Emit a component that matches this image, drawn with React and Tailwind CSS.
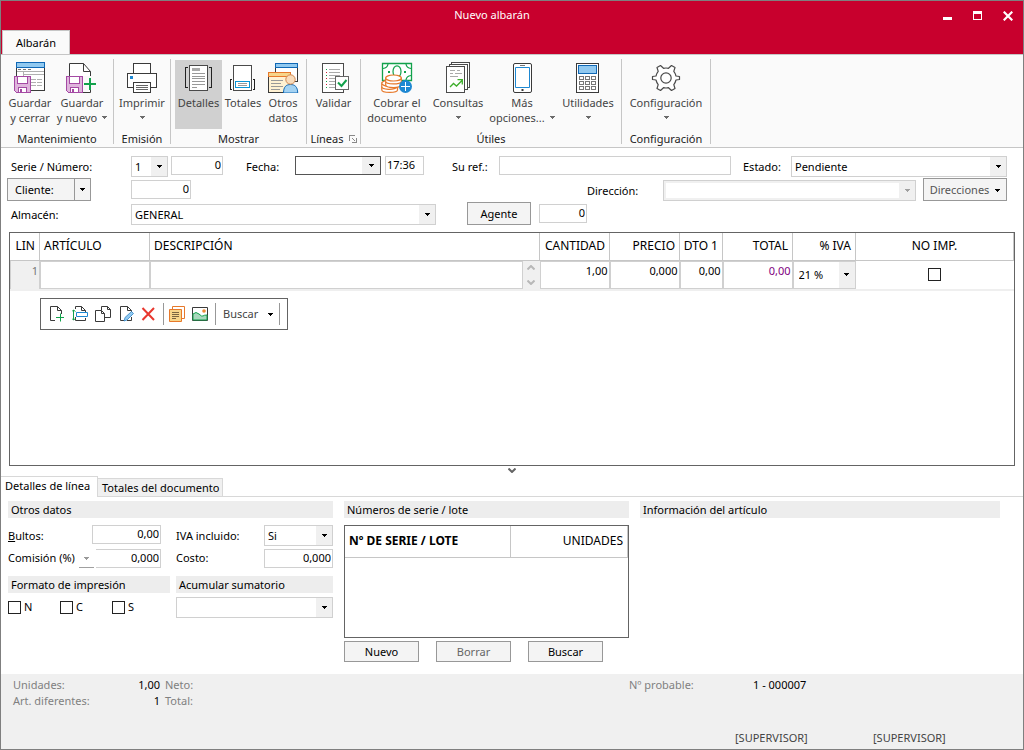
import { useState } from "react";

const Caret = ({ className = "text-black" }) => (
  <svg width="5" height="3" viewBox="0 0 5 3" fill="currentColor" shapeRendering="crispEdges" className={`shrink-0 ${className}`}>
    <path d="M0 0H5V1H4V2H3V3H2V2H1V1H0Z" />
  </svg>
);

const Floppy = () => (
  <g shapeRendering="crispEdges">
    <path d="M.5 15.5H16.5V31.5H2.5L.5 29.5Z" fill="#dfb5dc" stroke="#a54aa4" />
    <path d="M3.5 15.5H13.5V22.5H3.5Z" fill="#fff" stroke="#a54aa4" />
    <path d="M4.5 26.5H12.5V31.5H4.5Z" fill="#fff" stroke="#a54aa4" />
    <path d="M6 28H8V31H6Z" fill="#a54aa4" />
  </g>
);

const Icon = ({ children, size = 32 }) => (
  <svg width={size} height={size} viewBox={`0 0 ${size} ${size}`} fill="none" className="shrink-0">
    {children}
  </svg>
);

const SaveCloseIcon = () => (
  <Icon>
    <g shapeRendering="crispEdges">
      <path d="M2.5 6.5H30.5V29.5H2.5Z" fill="#fff" stroke="#3a3a3a" />
      <path d="M2.5 1.5H30.5V6.5H2.5Z" fill="#91c9f0" stroke="#1068b5" />
      <path d="M4 8.5H7M9 8.5H12M14 8.5H17" stroke="#777" />
      <path d="M3 10.5H30M9.5 11V15M10 13.5H30" stroke="#b0b0b0" />
      <path d="M17 18.5H28M17 21.5H28M17 24.5H28" stroke="#b0b0b0" strokeDasharray="5 1" />
    </g>
    <Floppy />
  </Icon>
);

const SaveNewIcon = () => (
  <Icon>
    <path d="M3.5 15V2.5H17.5L24.5 10.5V15M24.5 29V31.5H17" fill="#fff" stroke="#3a3a3a" />
    <path d="M17.5 2.5V10.5H24.5" stroke="#3a3a3a" />
    <Floppy />
    <path d="M18 23H30M24 17V29" stroke="#12a14b" strokeWidth="2" />
  </Icon>
);

const PrinterIcon = () => (
  <Icon>
    <g shapeRendering="crispEdges" stroke="#3a3a3a">
      <path d="M7.5 2.5H24.5V12.5H7.5Z" fill="#fff" />
      <path d="M1.5 12.5H30.5V26.5H1.5Z" fill="#fff" />
      <path d="M7.5 21.5H24.5V31.5H7.5Z" fill="#fff" />
      <path d="M10 24.5H22M10 26.5H22M10 28.5H22" stroke="#666" />
      <path d="M4 15H7V18H4Z" fill="#1e88d2" stroke="none" />
    </g>
  </Icon>
);

const DetailsIcon = () => (
  <Icon>
    <g shapeRendering="crispEdges">
      <path d="M6.5 4.5H24.5V29.5H6.5Z" fill="#fff" stroke="#4a4a4a" />
      <path d="M5 6.5H2.5V26.5H5M26 6.5H28.5V26.5H26" stroke="#222" />
      <path d="M9 7H17V10H9Z" fill="#aaa" />
      <path d="M9 12.5H22M9 15.5H22M9 17.5H22M9 20.5H22M9 23.5H22M9 26.5H14" stroke="#999" />
    </g>
  </Icon>
);

const TotalsIcon = () => (
  <Icon>
    <g shapeRendering="crispEdges">
      <path d="M6.5 4.5H24.5V29.5H6.5Z" fill="#fff" stroke="#4a4a4a" />
      <path d="M5 18.5H3.5V28.5H5M26 18.5H27.5V28.5H26" stroke="#222" />
      <path d="M8.5 20.5H22.5V26.5H8.5Z" fill="#fff" stroke="#0a94d6" />
      <path d="M11 22.5H20M11 24.5H20" stroke="#999" />
    </g>
  </Icon>
);

const OtherDataIcon = () => (
  <Icon>
    <g shapeRendering="crispEdges">
      <path d="M8.5 6.5H30.5V20.5H8.5Z" fill="#fff" stroke="#3a3a3a" />
      <path d="M8.5 2.5H30.5V6.5H8.5Z" fill="#91c9f0" stroke="#1068b5" />
      <path d="M1.5 15.5H23.5V31.5H1.5Z" fill="#fff1d2" stroke="#3a3a3a" />
      <path d="M1.5 11.5H23.5V15.5H1.5Z" fill="#f7d58a" stroke="#e7792b" />
      <path d="M4 19.5H16M4 22.5H14M4 25.5H16M4 28.5H13" stroke="#999" />
    </g>
    <path d="M16.5 32C16.5 26 19 23.5 23.5 23.5S30.7 26 30.7 32Z" fill="#a4d2f2" stroke="#1068b5" />
    <circle cx="23.5" cy="18.5" r="4.7" fill="#f9dcbc" stroke="#d08850" />
  </Icon>
);

const ValidateIcon = () => (
  <Icon>
    <g shapeRendering="crispEdges">
      <path d="M4.5 2.5H25.5V31.5H4.5Z" fill="#fff" stroke="#4a4a4a" />
      <path d="M11 8.5H22M11 11.5H22M11 14.5H22M11 17.5H18M11 20.5H18M11 23.5H18M11 26.5H18" stroke="#aaa" />
      <path d="M8 8.5H9M8 14.5H9M8 20.5H9M8 26.5H9" stroke="#12a14b" />
      <path d="M8 11.5H9M8 17.5H9M8 23.5H9" stroke="#d02030" />
      <path d="M17.5 15.5H30.5V28.5H17.5Z" fill="#fff" stroke="#666" />
    </g>
    <path d="M20 21.5L23.5 25L28.5 19" stroke="#12a14b" strokeWidth="2" />
  </Icon>
);

const CashIcon = () => (
  <Icon>
    <g stroke="#12a14b">
      <path d="M1.5 2.5H30.5V19.5H1.5Z" fill="#fff" strokeWidth="1.3" />
      <path d="M2 7.5Q6.5 7 7 3M30 7.5Q25.5 7 25 3M30 14.5Q25.5 15 25 19" strokeWidth="1.2" />
      <ellipse cx="16" cy="10.5" rx="4" ry="5.7" strokeWidth="1.2" />
      <path d="M7 10H9V12H7ZM23 10H25V12H23Z" fill="#12a14b" stroke="none" />
    </g>
    <g fill="#fff" stroke="#e7792b" strokeWidth="1.2">
      <path d="M.8 22V29C.8 32.2 16.5 32.2 16.5 29V25H10Z" />
      <path d="M.8 25.5C1 29 13 29.3 16.5 26" />
      <ellipse cx="8.3" cy="22.2" rx="7.5" ry="3" />
      <path d="M4.7 17V24C4.7 27.4 20.3 27.4 20.3 24V17Z" />
      <path d="M4.7 20.5C4.7 23.7 20.3 23.7 20.3 20.5" />
      <ellipse cx="12.5" cy="17" rx="7.8" ry="3" />
    </g>
    <circle cx="24.5" cy="25.5" r="6.5" fill="#1e88d2" />
    <path d="M20 25.5H29M24.5 21V30" stroke="#fff" />
  </Icon>
);

const QueriesIcon = () => (
  <Icon>
    <g shapeRendering="crispEdges" stroke="#4a4a4a">
      <path d="M9.5 1.5H27.5V26.5H9.5Z" fill="#fff" />
      <path d="M7.5 3.5H25.5V28.5H7.5Z" fill="#fff" />
      <path d="M4.5 5.5H22.5V31.5H4.5Z" fill="#fff" />
      <path d="M8 9.5H13M15 9.5H18M8 12.5H11M13 12.5H20M8 15.5H16" stroke="#aaa" />
    </g>
    <path d="M8 26L11.5 22.5L14.5 25L20 19.5M15.5 18.7H20.3V23.5" stroke="#3dae2b" strokeWidth="1.3" />
  </Icon>
);

const PhoneIcon = () => (
  <Icon>
    <rect x="7.5" y="2.5" width="18" height="29" rx="1.5" fill="#fff" stroke="#3a3a3a" />
    <path d="M9.5 6.5H23.5V26.5H9.5Z" fill="#fff" stroke="#1e88d2" />
    <path d="M14 4.5H19" stroke="#777" />
    <path d="M15.5 28H17.5V30H15.5Z" fill="#3a3a3a" />
  </Icon>
);

const CalculatorIcon = () => (
  <Icon>
    <g shapeRendering="crispEdges">
      <path d="M4.5 2.5H26.5V31.5H4.5Z" fill="#fff" stroke="#3a3a3a" />
      <path d="M6.5 4.5H24.5V12.5H6.5Z" fill="#91c9f0" stroke="#1068b5" />
      {[15.5, 20.5, 25.5].map((y) =>
        [7.5, 13.5, 19.5].map((x) => <rect key={`${x}-${y}`} x={x} y={y} width="4" height="3" stroke="#777" />)
      )}
    </g>
  </Icon>
);

const GearIcon = () => (
  <Icon>
    <g stroke="#4a4a4a" strokeWidth="1.2" strokeLinejoin="round" fill="#fff">
      <path d="M2.5 15.5L6 15Q6.6 12.4 8.2 10.4L7 6.5L10.5 4.5L13.5 7.3Q16 6.7 18.5 7.3L21.5 4.5L25 6.5L23.8 10.4Q25.4 12.4 26 15L29.5 15.5V18.5L26 19Q25.4 21.6 23.8 23.6L25 27.5L21.5 29.5L18.5 26.7Q16 27.3 13.5 26.7L10.5 29.5L7 27.5L8.2 23.6Q6.6 21.6 6 19L2.5 18.5Z" />
      <circle cx="16" cy="17" r="5.2" />
    </g>
  </Icon>
);

const RibbonButton = ({ icon, lines, arrow, active, className }) => (
  <button className={`flex h-[69px] shrink-0 flex-col items-center pt-px leading-[15px] text-[#444] ${active ? "bg-[#d0d0d0]" : ""} ${className}`}>
    {icon}
    <span className="mt-[2px] whitespace-nowrap">{lines[0]}</span>
    <span className="flex h-[15px] items-center gap-[5px] whitespace-nowrap">
      {lines[1]}
      {arrow && <Caret className="text-[#6a6a6a]" />}
    </span>
  </button>
);

const RibbonGroup = ({ title, launcher, className, children }) => (
  <div className={`flex h-[85px] shrink-0 flex-col border-r border-[#c6c6c6] ${className}`}>
    <div className="flex flex-1 justify-center pt-px">{children}</div>
    <div className="flex items-center justify-center gap-[5px] leading-[10px] text-[#222]">
      {title}
      {launcher && (
        <svg width="8" height="8" viewBox="0 0 8 8" fill="none" stroke="#888" shapeRendering="crispEdges">
          <path d="M.5 6V.5H6M3 3L6 6M7.5 3V7.5H3" />
        </svg>
      )}
    </div>
  </div>
);

const Combo = ({ value, options, id, label, className = "", border = "border-[#d0d0d0]", disabled }) => {
  const [current, setCurrent] = useState(value);
  return (
    <div className={`relative flex border bg-white ${border} ${className}`}>
      <select
        id={id}
        aria-label={label}
        value={current}
        disabled={disabled}
        onChange={(e) => setCurrent(e.target.value)}
        className={`w-full min-w-0 appearance-none pt-px pr-4 pl-[3px] text-black outline-none ${disabled ? "border-2 border-[#f0f0f0]" : ""}`}
      >
        {(options || [value]).map((o) => (
          <option key={o}>{o}</option>
        ))}
      </select>
      <span className="pointer-events-none absolute inset-y-0 right-0 flex w-4 items-center justify-center bg-[#f0f0f0]">
        <Caret className={disabled ? "text-[#a0a0a0]" : "text-black"} />
      </span>
    </div>
  );
};

const Field = ({ value = "", label, id, className = "" }) => (
  <input
    id={id}
    aria-label={label}
    defaultValue={value}
    className={`h-[19px] min-w-0 border border-[#d0d0d0] bg-white pr-px pb-[2px] text-black outline-none ${className}`}
  />
);

const Check = ({ id, label }) => (
  <input
    id={id}
    aria-label={label}
    type="checkbox"
    className="size-[13px] shrink-0 appearance-none border border-[#222] bg-white checked:bg-[#444]"
  />
);

const SectionTitle = ({ children }) => <h2 className="h-[17px] bg-[#ededed] pl-[3px] leading-[17px]">{children}</h2>;

const PushButton = ({ children, disabled, className = "" }) => (
  <button disabled={disabled} className={`border border-[#989898] bg-[#f4f4f4] pt-[2px] ${disabled ? "text-[#666]" : "text-black"} ${className}`}>
    {children}
  </button>
);

const columns = [
  { name: "LIN", width: "w-[29px]", align: "text-right pr-1" },
  { name: "ARTÍCULO", width: "w-[110px]", align: "text-left pl-1" },
  { name: "DESCRIPCIÓN", width: "", align: "text-left pl-1" },
  { name: "CANTIDAD", width: "w-[70px]", align: "text-right pr-1" },
  { name: "PRECIO", width: "w-[70px]", align: "text-right pr-1" },
  { name: "DTO 1", width: "w-[43px]", align: "text-right pr-1" },
  { name: "TOTAL", width: "w-[70px]", align: "text-right pr-1" },
  { name: "% IVA", width: "w-[63px]", align: "text-right pr-1" },
  { name: "NO IMP.", width: "w-[158px]", align: "text-center" },
];

const cellInput = "block h-7 w-full min-w-0 border border-[#d0d0d0] bg-white pr-px pb-2 text-right outline-none";

const TitleBar = () => (
  <header className="bg-[#c8002d]">
    <div className="flex h-[29px] items-center pr-[10px] text-white">
      <h1 className="flex-1 pl-10 text-center">Nuevo albarán</h1>
      <div className="flex h-[23px] gap-5">
        <button aria-label="Minimizar">
          <svg width="10" height="10" viewBox="0 0 10 10" shapeRendering="crispEdges"><path d="M0 6H9V9H0Z" fill="#fff" /></svg>
        </button>
        <button aria-label="Maximizar">
          <svg width="10" height="10" viewBox="0 0 10 10" shapeRendering="crispEdges"><path d="M0 0H9V9H0ZM1 3V8H8V3Z" fill="#fff" fillRule="evenodd" /></svg>
        </button>
        <button aria-label="Cerrar">
          <svg width="10" height="10" viewBox="0 0 10 10"><path d="M.7 .7L9.3 9.3M9.3 .7L.7 9.3" stroke="#fff" strokeWidth="2.2" /></svg>
        </button>
      </div>
    </div>
    <div className="flex h-6 pl-px">
      <button className="h-[25px] w-[68px] border border-b-0 border-[#c6c6c6] bg-[#fafafa] text-black">Albarán</button>
    </div>
  </header>
);

const Ribbon = () => (
  <nav className="flex h-[94px] border-y border-[#c6c6c6] bg-[#fafafa] pt-1">
    <RibbonGroup title="Mantenimiento" className="w-[113px]">
      <RibbonButton icon={<SaveCloseIcon />} lines={["Guardar", "y cerrar"]} className="w-[52px]" />
      <RibbonButton icon={<SaveNewIcon />} lines={["Guardar", "y nuevo"]} arrow className="mr-[2px] w-[52px]" />
    </RibbonGroup>
    <RibbonGroup title="Emisión" className="w-[57px]">
      <RibbonButton icon={<PrinterIcon />} lines={["Imprimir"]} arrow className="w-[52px]" />
    </RibbonGroup>
    <RibbonGroup title="Mostrar" className="w-[136px]">
      <RibbonButton icon={<DetailsIcon />} lines={["Detalles"]} active className="w-[47px]" />
      <RibbonButton icon={<TotalsIcon />} lines={["Totales"]} className="w-[42px]" />
      <RibbonButton icon={<OtherDataIcon />} lines={["Otros", "datos"]} className="w-[38px]" />
    </RibbonGroup>
    <RibbonGroup title="Líneas" launcher className="w-[54px]">
      <RibbonButton icon={<ValidateIcon />} lines={["Validar"]} className="w-[48px]" />
    </RibbonGroup>
    <RibbonGroup title="Útiles" className="w-[261px]">
      <RibbonButton icon={<CashIcon />} lines={["Cobrar el", "documento"]} className="w-[66px]" />
      <RibbonButton icon={<QueriesIcon />} lines={["Consultas"]} arrow className="w-[56px]" />
      <RibbonButton icon={<PhoneIcon />} lines={["Más", "opciones..."]} arrow className="w-[72px]" />
      <RibbonButton icon={<CalculatorIcon />} lines={["Utilidades"]} arrow className="w-[60px]" />
    </RibbonGroup>
    <RibbonGroup title="Configuración" className="w-[89px]">
      <RibbonButton icon={<GearIcon />} lines={["Configuración"]} arrow className="w-[80px]" />
    </RibbonGroup>
  </nav>
);

const DocumentForm = () => (
  <section className="pt-[6px] pr-[16px] pl-[6px]">
    <div className="flex h-6 items-start pt-[2px]">
      <label htmlFor="serie" className="w-[124px] pl-1 leading-[22px]">Serie / Número:</label>
      <Combo id="serie" value="1" className="h-[21px] w-[37px]" />
      <Field label="Número" value="0" className="ml-[3px] w-[52px] text-right" />
      <label htmlFor="fecha" className="ml-[23px] w-[49px] leading-[22px]">Fecha:</label>
      <div className="flex h-[19px] w-[86px] border border-[#555] bg-white">
        <input id="fecha" className="min-w-0 flex-1 outline-none" />
        <button aria-label="Calendario" className="flex w-[18px] items-center justify-center bg-[#f0f0f0]"><Caret /></button>
      </div>
      <Field label="Hora" value="17:36" className="ml-1 w-[39px] pl-px" />
      <label htmlFor="ref" className="ml-[28px] w-[47px] leading-[22px]">Su ref.:</label>
      <Field id="ref" className="flex-1" />
      <label htmlFor="estado" className="ml-3 w-[48px] leading-[22px]">Estado:</label>
      <Combo id="estado" value="Pendiente" className="h-[21px] w-[216px]" />
    </div>
    <div className="flex h-6 items-start">
      <div className="flex h-[23px] w-[84px] border border-[#989898] bg-[#f4f4f4]">
        <button className="flex-1 pt-[2px] pl-[7px] text-left">Cliente:</button>
        <button aria-label="Opciones de cliente" className="flex w-4 items-center justify-center border-l border-[#989898]"><Caret /></button>
      </div>
      <Field label="Cliente" value="0" className="mt-[2px] ml-10 w-[60px] text-right" />
      <label htmlFor="direccion" className="ml-auto w-[76px] pt-[2px] leading-[22px]">Dirección:</label>
      <Combo id="direccion" value="" disabled className="mt-[2px] h-[21px] w-[253px]" />
      <button className="ml-[7px] flex h-[23px] w-[84px] items-center justify-center gap-[6px] border border-[#989898] bg-[#f4f4f4] pt-px text-[#555]">
        Direcciones <Caret />
      </button>
    </div>
    <div className="flex h-6 items-start">
      <label htmlFor="almacen" className="w-[124px] pt-[2px] pl-1 leading-[22px]">Almacén:</label>
      <Combo id="almacen" value="GENERAL" className="mt-[2px] h-[21px] w-[305px]" />
      <PushButton className="ml-[31px] h-[23px] w-[64px]">Agente</PushButton>
      <Field label="Agente" value="0" className="mt-[2px] ml-2 w-[48px] text-right" />
    </div>
  </section>
);

const LineToolbar = () => (
  <div className="mt-[7px] ml-[30px] flex h-8 w-[248px] items-center border border-[#646464] bg-white pl-2">
    <button aria-label="Nueva línea" className="w-[23px]">
      <Icon size={16}>
        <path d="M6 14.5H1.5V.5H8.5L12.5 4.5V8M8.5 .5V4.5H12.5" stroke="#3a3a3a" />
        <path d="M7 11.5H15M11.5 7.5V15.5" stroke="#12a14b" />
      </Icon>
    </button>
    <button aria-label="Insertar línea" className="w-[23px]">
      <Icon size={16}>
        <path d="M3.5 3V.5H9.5L13.5 4.5V6M3.5 11V14.5H13.5V12M9.5 .5V4.5H13.5" stroke="#3a3a3a" />
        <path d="M4.5 6.5H15.5V10.5H4.5Z" fill="#fff" stroke="#1e88d2" />
        <path d="M1.5 4V14M0 5.5L1.5 4L3.5 5.5M0 12.5L1.5 14L3.5 12.5" stroke="#12a14b" />
      </Icon>
    </button>
    <button aria-label="Duplicar línea" className="w-[23px]">
      <Icon size={16}>
        <path d="M6.5 4V.5H12.5L15.5 3.5V11.5H10M12.5 .5V3.5H15.5" stroke="#3a3a3a" />
        <path d="M.5 4.5H6.5L9.5 7.5V15.5H.5ZM6.5 4.5V7.5H9.5" fill="#fff" stroke="#3a3a3a" />
      </Icon>
    </button>
    <button aria-label="Modificar línea" className="w-[23px]">
      <Icon size={16}>
        <path d="M6 14.5H2.5V.5H9.5L13.5 4.5V6M13.5 11V14.5H9M9.5 .5V4.5H13.5" stroke="#3a3a3a" />
        <path d="M6 15L7 11.5L13.5 5.5L15.5 7.5L9 14Z" fill="#91c9f0" stroke="#1e78c2" strokeWidth=".7" />
      </Icon>
    </button>
    <button aria-label="Borrar línea" className="w-[22px]">
      <Icon size={16}>
        <path d="M1.5 2L13 14M13 2L1.5 14" stroke="#e8372e" strokeWidth="2" />
      </Icon>
    </button>
    <span className="h-[22px] w-px bg-[#989898]" />
    <button aria-label="Notas" className="ml-[5px] w-[23px]">
      <Icon size={16}>
        <path d="M3.5 .5H15.5V12.5H3.5Z" fill="#fff" stroke="#e7792b" />
        <path d="M.5 3.5H12.5V15.5H.5Z" fill="#f7d58a" stroke="#e7792b" />
        <path d="M3 6.5H10M3 8.5H10M3 10.5H10M3 12.5H7" stroke="#7a6540" />
      </Icon>
    </button>
    <button aria-label="Imagen" className="w-[23px]">
      <Icon size={16}>
        <path d="M.5 1.5H15.5V14.5H.5Z" fill="#fff" stroke="#3a3a3a" />
        <path d="M1 8Q4 5 7 8T11 10T15 9V14H1Z" fill="#a9d8bd" stroke="#12a14b" />
        <circle cx="12" cy="5" r="1.8" fill="#ee8a35" />
      </Icon>
    </button>
    <span className="h-[22px] w-px bg-[#989898]" />
    <button className="flex h-full w-[63px] items-center gap-[10px] pl-[7px] text-[#444]">
      Buscar <Caret />
    </button>
    <span className="h-[22px] w-px bg-[#989898]" />
  </div>
);

const LinesGrid = () => (
  <section className="mx-2 mt-[6px] flex min-h-[140px] flex-1 flex-col border border-[#646464] bg-white">
    <table className="w-full table-fixed border-collapse text-[12px]">
      <thead>
        <tr className="h-[27px]">
          {columns.map((c) => (
            <th key={c.name} className={`border-r border-b border-[#c6c6c6] font-normal ${c.width} ${c.align}`}>{c.name}</th>
          ))}
        </tr>
      </thead>
      <tbody className="text-[11px]">
        <tr className="h-[30px] border-b-2 border-[#efefef] align-top">
          <td className="border border-[#d0d0d0] bg-[#f0f0f0] pt-[2px] pr-px text-right text-[#777]">1</td>
          <td className="p-0"><input aria-label="Artículo" className={cellInput} /></td>
          <td className="p-0">
            <div className="flex">
              <input aria-label="Descripción" className={cellInput} />
              <div className="flex h-7 w-[17px] shrink-0 flex-col items-center justify-between bg-[#f0f0f0] py-1">
                <svg width="8" height="5" viewBox="0 0 8 5" fill="none" stroke="#b8b8b8" strokeWidth="2"><path d="M.5 4.5L4 1L7.5 4.5" /></svg>
                <svg width="8" height="5" viewBox="0 0 8 5" fill="none" stroke="#b8b8b8" strokeWidth="2"><path d="M.5 .5L4 4L7.5 .5" /></svg>
              </div>
            </div>
          </td>
          <td className="p-0"><input aria-label="Cantidad" defaultValue="1,00" className={cellInput} /></td>
          <td className="p-0"><input aria-label="Precio" defaultValue="0,000" className={cellInput} /></td>
          <td className="p-0"><input aria-label="Descuento" defaultValue="0,00" className={cellInput} /></td>
          <td className="p-0"><input aria-label="Total" defaultValue="0,00" className={`${cellInput} text-[#800080]`} /></td>
          <td className="p-0"><Combo label="IVA" value="21 %" options={["21 %", "10 %", "4 %"]} className="h-7 pl-[2px]" /></td>
          <td className="p-0"><div className="flex h-7 items-center justify-center"><Check label="No imprimir" /></div></td>
        </tr>
      </tbody>
    </table>
    <LineToolbar />
  </section>
);

const LineDetails = () => (
  <section className="flex h-[177px] items-start gap-[11px] pt-1 pl-[7px]">
    <div className="w-[325px] shrink-0">
      <SectionTitle>Otros datos</SectionTitle>
      <div className="mt-[7px] grid grid-cols-[84px_69px_15px_88px_69px] gap-y-[2px]">
        <label htmlFor="bultos" className="leading-[22px]"><u>B</u>ultos:</label>
        <Field id="bultos" value="0,00" className="text-right" />
        <span />
        <label htmlFor="iva" className="leading-[22px]">IVA incluido:</label>
        <Combo id="iva" value="Si" options={["Si", "No"]} className="h-[21px]" />
        <div className="col-span-2 flex">
          <label htmlFor="comision" className="w-[71px] shrink-0 leading-[18px]">Comisión (%)</label>
          <button aria-label="Tipo de comisión" className="mr-[2px] flex h-[19px] w-[15px] items-center justify-center border-b border-[#a0a0a0]">
            <Caret className="text-[#999]" />
          </button>
          <Field id="comision" value="0,000" className="flex-1 border-l-0 text-right" />
        </div>
        <span />
        <label htmlFor="costo" className="leading-[18px]">Costo:</label>
        <Field id="costo" value="0,000" className="text-right" />
      </div>
      <div className="mt-2 flex gap-[6px]">
        <div className="w-[162px]">
          <SectionTitle>Formato de impresión</SectionTitle>
          <div className="mt-1 flex">
            {["N", "C", "S"].map((l) => (
              <div key={l} className="flex h-[21px] w-[52px] items-center gap-[3px]">
                <Check id={`formato-${l}`} />
                <label htmlFor={`formato-${l}`}>{l}</label>
              </div>
            ))}
          </div>
        </div>
        <div className="flex-1">
          <SectionTitle>Acumular sumatorio</SectionTitle>
          <Combo label="Acumular sumatorio" value="" className="mt-1 h-[21px]" />
        </div>
      </div>
    </div>

    <div className="w-[285px] shrink-0">
      <SectionTitle>Números de serie / lote</SectionTitle>
      <div className="mt-[7px] h-[113px] border border-[#646464]">
        <table className="w-full table-fixed border-collapse text-[12px]">
          <thead>
            <tr className="h-[31px]">
              <th className="w-[165px] border-r border-b border-[#c6c6c6] pl-1 text-left font-bold">Nº DE SERIE / LOTE</th>
              <th className="border-r border-b border-[#c6c6c6] pr-1 text-right font-normal">UNIDADES</th>
            </tr>
          </thead>
        </table>
      </div>
      <div className="mt-[3px] flex gap-[17px]">
        <PushButton className="h-[21px] w-[75px]">Nuevo</PushButton>
        <PushButton disabled className="h-[21px] w-[75px]">Borrar</PushButton>
        <PushButton className="h-[21px] w-[75px]">Buscar</PushButton>
      </div>
    </div>

    <div className="mr-[23px] min-w-0 flex-1">
      <SectionTitle>Información del artículo</SectionTitle>
    </div>
  </section>
);

const StatusBar = () => (
  <footer className="flex h-[75px] flex-col justify-between bg-[#f0f0f0] pt-[3px] pb-[3px] pl-3 leading-4 text-[#808080]">
    <div className="flex">
      <div className="grid w-[616px] grid-cols-[100px_47px_1fr]">
        <span>Unidades:</span>
        <span className="text-right text-black">1,00</span>
        <span className="pl-[5px]">Neto:</span>
        <span>Art. diferentes:</span>
        <span className="text-right text-black">1</span>
        <span className="pl-[5px]">Total:</span>
      </div>
      <span className="w-[124px]">Nº probable:</span>
      <span className="text-black">1 - 000007</span>
    </div>
    <div className="flex justify-end pr-[12px] text-[#444]">
      <span className="w-[138px]">[SUPERVISOR]</span>
      <span className="w-[138px]">[SUPERVISOR]</span>
    </div>
  </footer>
);

export default function App() {
  const [tab, setTab] = useState("linea");
  const tabStyle = (name) =>
    tab === name ? "h-[21px] border-b-0 bg-white pb-px pl-1" : "h-[19px] border-l-0 bg-[#f0f0f0] pt-px pl-1";

  return (
    <div className="flex min-h-screen flex-col border border-[#7f7f7f] bg-white font-['Noto_Sans','Open_Sans',sans-serif] text-[11px] text-black">
      <TitleBar />
      <Ribbon />
      <DocumentForm />
      <LinesGrid />
      <button aria-label="Contraer" className="flex h-[10px] items-start justify-center pt-[2px]">
        <svg width="8" height="5" viewBox="0 0 8 5" fill="none" stroke="#646464" strokeWidth="2"><path d="M.5 .5L4 4L7.5 .5" /></svg>
      </button>
      <div className="flex h-[21px] items-end border-b border-[#d8d8d8]">
        <button onClick={() => setTab("linea")} className={`-mb-px w-[97px] border border-l-0 border-[#d8d8d8] text-left ${tabStyle("linea")}`}>
          Detalles de línea
        </button>
        <button onClick={() => setTab("totales")} className={`-mb-px w-[125px] border border-[#d8d8d8] text-left ${tabStyle("totales")}`}>
          Totales del documento
        </button>
      </div>
      <LineDetails />
      <StatusBar />
    </div>
  );
}
